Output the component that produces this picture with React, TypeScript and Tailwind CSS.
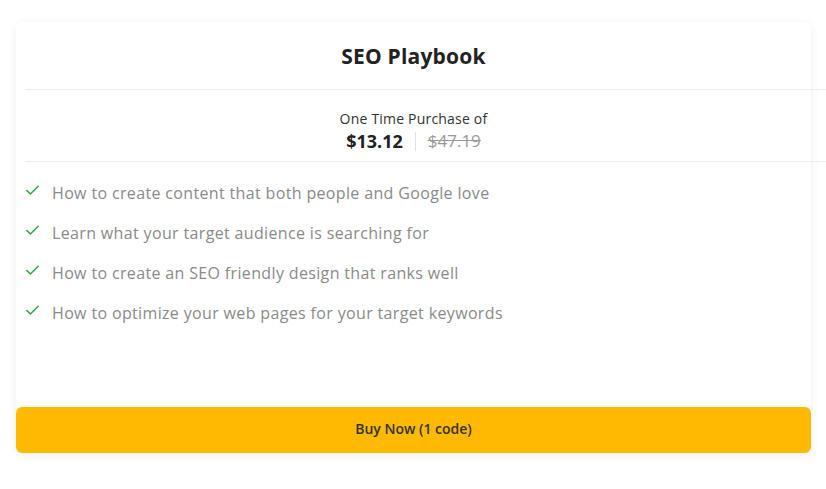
import { Check } from "lucide-react";

const features = [
  "How to create content that both people and Google love",
  "Learn what your target audience is searching for",
  "How to create an SEO friendly design that ranks well",
  "How to optimize your web pages for your target keywords",
];

export default function App() {
  return (
    <div className="min-h-screen bg-white px-4 pt-[22px] font-['Open_Sans',sans-serif]">
      <div className="flex h-[431px] w-[795px] flex-col rounded-md bg-white shadow-[0_2px_10px_rgba(0,0,0,0.07)]">
        <div className="flex h-[67px] items-center justify-center pt-[3px]">
          <h1 className="text-[21px] font-bold tracking-[0.2px] text-[#222]">SEO Playbook</h1>
        </div>
        <div className="ml-[9px] mr-[-15px] border-t border-[#ececec]" />
        <div className="flex h-[71px] flex-col items-center pt-[20px]">
          <p className="text-[14px] leading-[18px] tracking-[0.2px] text-[#333]">One Time Purchase of</p>
          <div className="mt-[1px] flex items-center">
            <span className="text-[18px] font-bold leading-6 text-[#222]">$13.12</span>
            <span className="mx-3 h-[19px] border-l border-[#e2e2e2]" />
            <span className="text-[17px] leading-6 text-[#999] line-through">$47.19</span>
          </div>
        </div>
        <div className="ml-[9px] mr-[-15px] border-t border-[#ececec]" />
        <ul className="flex flex-col gap-[18px] pl-2 pt-[20px]">
          {features.map((f) => (
            <li key={f} className="flex h-[22px] items-center">
              <Check className="mb-[6px] size-[17px] text-[#2eaa45]" strokeWidth={2.2} />
              <span className="ml-[11px] text-[16px] tracking-[0.35px] text-[#8a8a8a]">{f}</span>
            </li>
          ))}
        </ul>
        <button className="mt-auto h-[46px] w-full rounded-md bg-[#fdba00] pb-[3px] text-[14px] font-semibold text-[#333]">
          Buy Now (1 code)
        </button>
      </div>
    </div>
  );
}
